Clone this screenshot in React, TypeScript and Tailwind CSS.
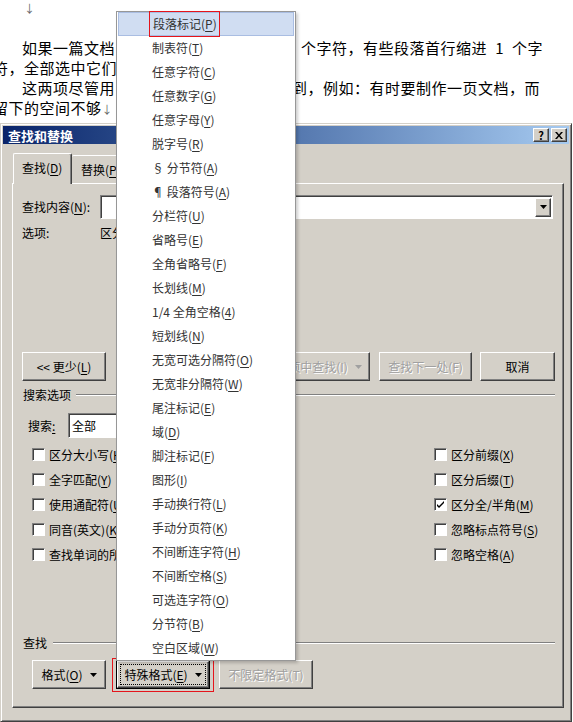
import React from 'react';

const F = "font-['Noto_Sans_CJK_SC',sans-serif]";

function Acc({ t, k, after }: { t: string; k: string; after?: string }) {
  return (
    <>
      {t}(<span className="underline underline-offset-[2px]">{k}</span>){after}
    </>
  );
}

function Arrow({ gray }: { gray?: boolean }) {
  return (
    <svg width="7" height="4" viewBox="0 0 7 4" className="shrink-0">
      <path d="M0 0h7L3.5 4z" fill={gray ? '#a0a0a0' : '#000'} />
    </svg>
  );
}

const raised =
  'border border-t-white border-l-white border-r-[#404040] border-b-[#404040] shadow-[inset_-1px_-1px_0_#808080]';
const sunken =
  'border border-t-[#808080] border-l-[#808080] border-r-white border-b-white shadow-[inset_1px_1px_0_#404040]';
const disabledText = 'text-[#a0a0a0] [text-shadow:1px_1px_0_#ffffff]';

function Btn({
  w,
  children,
  disabled,
  className = '',
}: {
  w: string;
  children: React.ReactNode;
  disabled?: boolean;
  className?: string;
}) {
  return (
    <div
      className={`${w} h-[29px] bg-[#d4d0c8] ${raised} flex items-center justify-center gap-[7px] text-[12px] ${
        disabled ? disabledText : 'text-black'
      } ${className}`}
    >
      {children}
    </div>
  );
}

function Check({ label, checked }: { label: React.ReactNode; checked?: boolean }) {
  return (
    <div className="h-[25px] flex items-center gap-[4px] text-[12px]">
      <div className={`w-[13px] h-[13px] bg-white ${sunken} flex items-center justify-center`}>
        {checked && (
          <svg width="7" height="7" viewBox="0 0 7 7">
            <path d="M0 3l2 2 5-5v2L2 7 0 5z" fill="#000" />
          </svg>
        )}
      </div>
      <span className="whitespace-nowrap">{label}</span>
    </div>
  );
}

function Sep({ label, ml }: { label: string; ml: string }) {
  return (
    <div className="h-[16px] flex items-center pl-[10px] pr-[8px] text-[12px]">
      <span>{label}</span>
      <div className={`flex-1 ${ml} border-t border-t-[#808080] border-b border-b-white`} />
    </div>
  );
}

const menuItems: [string, string][] = [
  ['段落标记', 'P'],
  ['制表符', 'T'],
  ['任意字符', 'C'],
  ['任意数字', 'G'],
  ['任意字母', 'Y'],
  ['脱字号', 'R'],
  ['§ 分节符', 'A'],
  ['¶ 段落符号', 'A'],
  ['分栏符', 'U'],
  ['省略号', 'E'],
  ['全角省略号', 'F'],
  ['长划线', 'M'],
  ['1/4 全角空格', '4'],
  ['短划线', 'N'],
  ['无宽可选分隔符', 'O'],
  ['无宽非分隔符', 'W'],
  ['尾注标记', 'E'],
  ['域', 'D'],
  ['脚注标记', 'F'],
  ['图形', 'I'],
  ['手动换行符', 'L'],
  ['手动分页符', 'K'],
  ['不间断连字符', 'H'],
  ['不间断空格', 'S'],
  ['可选连字符', 'O'],
  ['分节符', 'B'],
  ['空白区域', 'W'],
];

function Menu() {
  return (
    <div className="absolute left-[116px] top-[11px] w-[180px] bg-white border border-[#979797] shadow-[2px_2px_3px_rgba(0,0,0,0.2)] text-[12px] text-[#333]">
      {menuItems.map(([t, k], i) =>
        i === 0 ? (
          <div
            key={i}
            className="h-[24px] mx-[1px] bg-[#d0ddf2] border border-[#a9bde2] flex items-center pl-[34px]"
          >
            <span className="relative">
              <Acc t={t} k={k} />
              <span className="absolute -left-[4px] -right-[3px] -top-[4px] -bottom-[4px] border-[1.5px] border-[#e5141b]" />
            </span>
          </div>
        ) : (
          <div key={i} className="h-[24px] flex items-center pl-[35px] whitespace-nowrap">
            <Acc t={t} k={k} />
          </div>
        )
      )}
    </div>
  );
}

function Doc() {
  return (
    <div className="h-[123px] text-[15px] tracking-[0.5px] leading-[20px] text-black whitespace-nowrap overflow-hidden">
      <div className="h-[17px] pl-[24px] text-[11px] text-[#666] leading-[16px]">↓</div>
      <div className="mt-[21px] flex justify-between pl-[22px] pr-[30px]">
        <span>如果一篇文档</span>
        <span>个字符，有些段落首行缩进{'\u2002'}1{'\u2002'}个字</span>
      </div>
      <div className="-ml-[7px]">符，全部选中它们</div>
      <div className="flex justify-between pl-[22px] pr-[33px]">
        <span>这两项尽管用</span>
        <span>到，例如：有时要制作一页文档，而</span>
      </div>
      <div className="-ml-[7px]">
        留下的空间不够<span className="text-[11px] text-[#666]">↓</span>
      </div>
    </div>
  );
}

function Dialog() {
  return (
    <div className="w-[572px] h-[599px] bg-[#d4d0c8] border border-t-[#d4d0c8] border-l-[#d4d0c8] border-r-[#404040] border-b-[#404040] shadow-[inset_1px_1px_0_#fff,inset_-1px_-1px_0_#808080] p-[2px] text-[12px] text-black">
      <div className="h-[18px] bg-gradient-to-r from-[#0a246a] to-[#a6caf0] flex items-center justify-between pl-[5px] pr-[2px]">
        <span className="text-white font-bold text-[13px] leading-none">查找和替换</span>
        <div className="flex gap-[2px]">
          <div className={`w-[16px] h-[14px] bg-[#d4d0c8] ${raised} flex items-center justify-center text-[11px] font-bold leading-none`}>
            ?
          </div>
          <div className={`w-[16px] h-[14px] bg-[#d4d0c8] ${raised} flex items-center justify-center`}>
            <svg width="8" height="7" viewBox="0 0 8 7">
              <path d="M0 0h2l2 2.5L6 0h2L5 3.5 8 7H6L4 4.5 2 7H0l3-3.5z" fill="#000" />
            </svg>
          </div>
        </div>
      </div>

      <div className="mt-[9px] ml-[9px] mr-[5px]">
        <div className="flex items-end h-[30px] pl-[1px]">
          <div className="relative z-10 w-[59px] h-[31px] -mb-[1px] bg-[#d4d0c8] border-l border-t border-l-white border-t-white border-r border-r-[#404040] shadow-[inset_-1px_0_0_#808080] rounded-t-[2px] flex items-center pl-[8px] pb-[2px]">
            <Acc t="查找" k="D" />
          </div>
          <div className="w-[62px] h-[28px] bg-[#d4d0c8] border-t border-t-white border-r border-r-[#404040] shadow-[inset_-1px_0_0_#808080] rounded-t-[2px] flex items-center pl-[9px]">
            <Acc t="替换" k="P" />
          </div>
          <div className="w-[62px] h-[28px] bg-[#d4d0c8] border-t border-t-white border-r border-r-[#404040] shadow-[inset_-1px_0_0_#808080] rounded-t-[2px] flex items-center pl-[9px]">
            <Acc t="定位" k="G" />
          </div>
        </div>

        <div className="h-[525px] border border-t-white border-l-white border-r-[#404040] border-b-[#404040] shadow-[inset_-1px_-1px_0_#808080]">
          <div className="mt-[11px] flex items-center pl-[9px]">
            <span className="w-[78px]">
              <Acc t="查找内容" k="N" after=":" />
            </span>
            <div className={`w-[453px] h-[24px] bg-white ${sunken} flex justify-end items-center pr-[1px]`}>
              <div className={`w-[16px] h-[19px] bg-[#d4d0c8] ${raised} flex items-center justify-center`}>
                <Arrow />
              </div>
            </div>
          </div>
          <div className="mt-[6px] h-[16px] flex items-center pl-[9px]">
            <span className="w-[78px]">选项:</span>
            <span>区分全/半角</span>
          </div>

          <div className="mt-[111px] flex items-center pl-[9px]">
            <Btn w="w-[84px]">
              <span>
                &lt;&lt; <Acc t="更少" k="L" />
              </span>
            </Btn>
            <Btn w="w-[126px]" className="ml-[138px]" disabled>
              <span>在以下项中查找(I)</span>
              <Arrow gray />
            </Btn>
            <Btn w="w-[93px]" className="ml-[9px]" disabled>
              <span>查找下一处(F)</span>
            </Btn>
            <Btn w="w-[75px]" className="ml-[8px]">
              <span>取消</span>
            </Btn>
          </div>

          <div className="mt-[6px]">
            <Sep label="搜索选项" ml="ml-[5px]" />
          </div>

          <div className="mt-[10px] flex items-center pl-[15px]">
            <span className="w-[40px]">
              搜索<span className="underline underline-offset-[2px]">:</span>
            </span>
            <div className={`w-[130px] h-[25px] bg-white ${sunken} flex items-center justify-between pl-[3px] pr-[1px]`}>
              <span>全部</span>
              <div className={`w-[16px] h-[19px] bg-[#d4d0c8] ${raised} flex items-center justify-center`}>
                <Arrow />
              </div>
            </div>
          </div>

          <div className="mt-[4px] flex">
            <div className="w-[421px] pl-[19px]">
              <Check label={<Acc t="区分大小写" k="H" />} />
              <Check label={<Acc t="全字匹配" k="Y" />} />
              <Check label={<Acc t="使用通配符" k="U" />} />
              <Check label={<Acc t="同音(英文)" k="K" />} />
              <Check label={<Acc t="查找单词的所有形式(英文)" k="W" />} />
            </div>
            <div>
              <Check label={<Acc t="区分前缀" k="X" />} />
              <Check label={<Acc t="区分后缀" k="T" />} />
              <Check label={<Acc t="区分全/半角" k="M" />} checked />
              <Check label={<Acc t="忽略标点符号" k="S" />} />
              <Check label={<Acc t="忽略空格" k="A" />} />
            </div>
          </div>

          <div className="mt-[68px]">
            <Sep label="查找" ml="ml-[6px]" />
          </div>

          <div className="mt-[9px] flex items-center pl-[19px]">
            <Btn w="w-[74px]">
              <span>
                <Acc t="格式" k="O" />
              </span>
              <Arrow />
            </Btn>
            <div className="relative ml-[10px]">
              <div className="w-[94px] h-[29px] border border-black bg-[#d4d0c8]">
                <div className={`w-full h-full ${raised} flex items-center justify-center gap-[7px] p-[2px]`}>
                  <div className="w-full h-full border border-dotted border-black flex items-center justify-center gap-[7px]">
                    <span>
                      <Acc t="特殊格式" k="E" />
                    </span>
                    <Arrow />
                  </div>
                </div>
              </div>
              <div className="absolute -left-[4px] -right-[4px] -top-[2px] -bottom-[3px] border-[1.5px] border-[#e5141b]" />
            </div>
            <Btn w="w-[94px]" className="ml-[9px]" disabled>
              <span>不限定格式(T)</span>
            </Btn>
          </div>
        </div>
      </div>
    </div>
  );
}

export default function App() {
  return (
    <div className={`relative w-[573px] h-[722px] overflow-hidden bg-white ${F}`}>
      <Doc />
      <Dialog />
      <Menu />
    </div>
  );
}
